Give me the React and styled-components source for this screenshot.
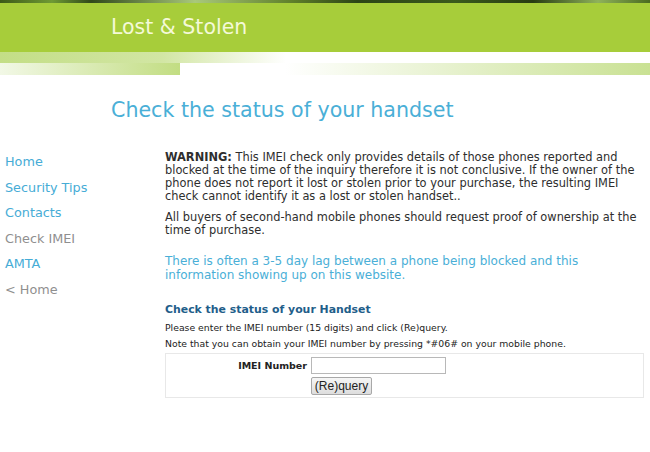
import React from 'react'
import styled, { createGlobalStyle } from 'styled-components'

const GlobalStyle = createGlobalStyle`
  html, body {
    margin: 0;
    padding: 0;
    background: #fff;
  }
  body {
    font-family: "DejaVu Sans", Verdana, sans-serif;
    color: #333;
  }
`

const TopStrip = styled.div`
  height: 3px;
  background: linear-gradient(90deg, #3d5a18 0%, #6f9a34 8%, #30481a 14%, #a9c87a 30%, #5f7f2a 45%,
    #2c4416 55%, #3a5a1c 70%, #283c12 82%, #8fb25a 92%, #4a6a20 100%);
`

const Banner = styled.header`
  background: #a7cd3a;
  height: 49px;
  display: flex;
  align-items: center;
  padding-left: 111px;
`

const BannerTitle = styled.h1`
  margin: 0;
  font-family: "DejaVu Sans", Verdana, sans-serif;
  font-weight: normal;
  font-size: 20.5px;
  color: #f4f9d8;
  padding-bottom: 1px;
`

const Stripe = styled.div`
  height: ${({ h }) => h}px;
  background: ${({ bg }) => bg};
`

const PageTitle = styled.h2`
  margin: 0;
  padding: 23px 0 0 111px;
  height: 50px;
  box-sizing: border-box;
  font-weight: normal;
  font-size: 20.6px;
  color: #4aafd7;
`

const Columns = styled.div`
  display: flex;
  padding-top: 26px;
`

const Sidebar = styled.nav`
  width: 165px;
  flex-shrink: 0;
  display: flex;
  flex-direction: column;
  padding-top: 2px;
`

const NavItem = styled.a`
  display: block;
  padding-left: 5px;
  height: 25.6px;
  line-height: 18px;
  font-size: 12.8px;
  text-decoration: none;
  color: ${({ muted }) => (muted ? '#8f8f8f' : '#46acd6')};
`

const Main = styled.main`
  flex: 1;
  min-width: 0;
`

const Para = styled.p`
  margin: 0 0 8px;
  font-size: 11.4px;
  line-height: 13px;
  color: #2e2e2e;
`

const Line = styled.span`
  display: block;
  white-space: nowrap;
`

const Notice = styled.p`
  margin: 17px 0 21px;
  font-size: 12px;
  line-height: 14px;
  color: #4aafd7;
`

const FormTitle = styled.h3`
  margin: 0 0 6px;
  font-size: 10.9px;
  font-weight: bold;
  color: #1f5e8a;
`

const Hint = styled.p`
  margin: 0 0 5px;
  font-size: 9.3px;
  line-height: 11px;
  color: #222;
`

const FormBox = styled.form`
  margin-top: -1px;
  border: 1px solid #e8e8e8;
  width: 479px;
  box-sizing: border-box;
  padding: 3px 0 2px;
  display: grid;
  grid-template-columns: 141px auto;
  column-gap: 4px;
  row-gap: 3px;
  align-items: center;
`

const Label = styled.label`
  font-size: 9.5px;
  font-weight: bold;
  color: #222;
  text-align: right;
`

const Input = styled.input`
  width: 135px;
  height: 17px;
  box-sizing: border-box;
  border: 1px solid #b8b8b8;
  margin: 0;
`

const Button = styled.button`
  grid-column: 2;
  justify-self: start;
  width: 61px;
  height: 18px;
  padding: 0;
  font-family: "Liberation Sans", Arial, sans-serif;
  font-size: 12px;
  color: #222;
  background: linear-gradient(#f6f6f6, #dddddd);
  border: 1px solid #a8a8a8;
  border-radius: 2px;
`

const navLinks = [
  { label: 'Home' },
  { label: 'Security Tips' },
  { label: 'Contacts' },
  { label: 'Check IMEI', muted: true },
  { label: 'AMTA' },
  { label: '< Home', muted: true },
]

export default function App() {
  return (
    <>
      <GlobalStyle />
      <TopStrip />
      <Banner>
        <BannerTitle>Lost &amp; Stolen</BannerTitle>
      </Banner>
      <Stripe h={11} bg="linear-gradient(90deg, #c3de86 0%, #d2e6a4 25%, #ffffff 44%)" />
      <Stripe
        h={12}
        bg="linear-gradient(90deg, #f2f8e6 0px, #c2dd82 180px, #ffffff 180px, #ffffff 285px, #c9e193 650px)"
      />
      <PageTitle>Check the status of your handset</PageTitle>
      <Columns>
        <Sidebar>
          {navLinks.map((item) => (
            <NavItem key={item.label} href="#" muted={item.muted}>
              {item.label}
            </NavItem>
          ))}
        </Sidebar>
        <Main>
          <Para>
            <Line>
              <b>WARNING:</b> This IMEI check only provides details of those phones reported and
            </Line>
            <Line>
              blocked at the time of the inquiry therefore it is not conclusive. If the owner of the
            </Line>
            <Line>phone does not report it lost or stolen prior to your purchase, the resulting IMEI</Line>
            <Line>check cannot identify it as a lost or stolen handset..</Line>
          </Para>
          <Para>
            <Line>All buyers of second-hand mobile phones should request proof of ownership at the</Line>
            <Line>time of purchase.</Line>
          </Para>
          <Notice>
            There is often a 3-5 day lag between a phone being blocked and this
            <br />
            information showing up on this website.
          </Notice>
          <FormTitle>Check the status of your Handset</FormTitle>
          <Hint>Please enter the IMEI number (15 digits) and click (Re)query.</Hint>
          <Hint>Note that you can obtain your IMEI number by pressing *#06# on your mobile phone.</Hint>
          <FormBox onSubmit={(e) => e.preventDefault()}>
            <Label htmlFor="imei">IMEI Number</Label>
            <Input id="imei" type="text" />
            <Button type="submit">(Re)query</Button>
          </FormBox>
        </Main>
      </Columns>
    </>
  )
}
